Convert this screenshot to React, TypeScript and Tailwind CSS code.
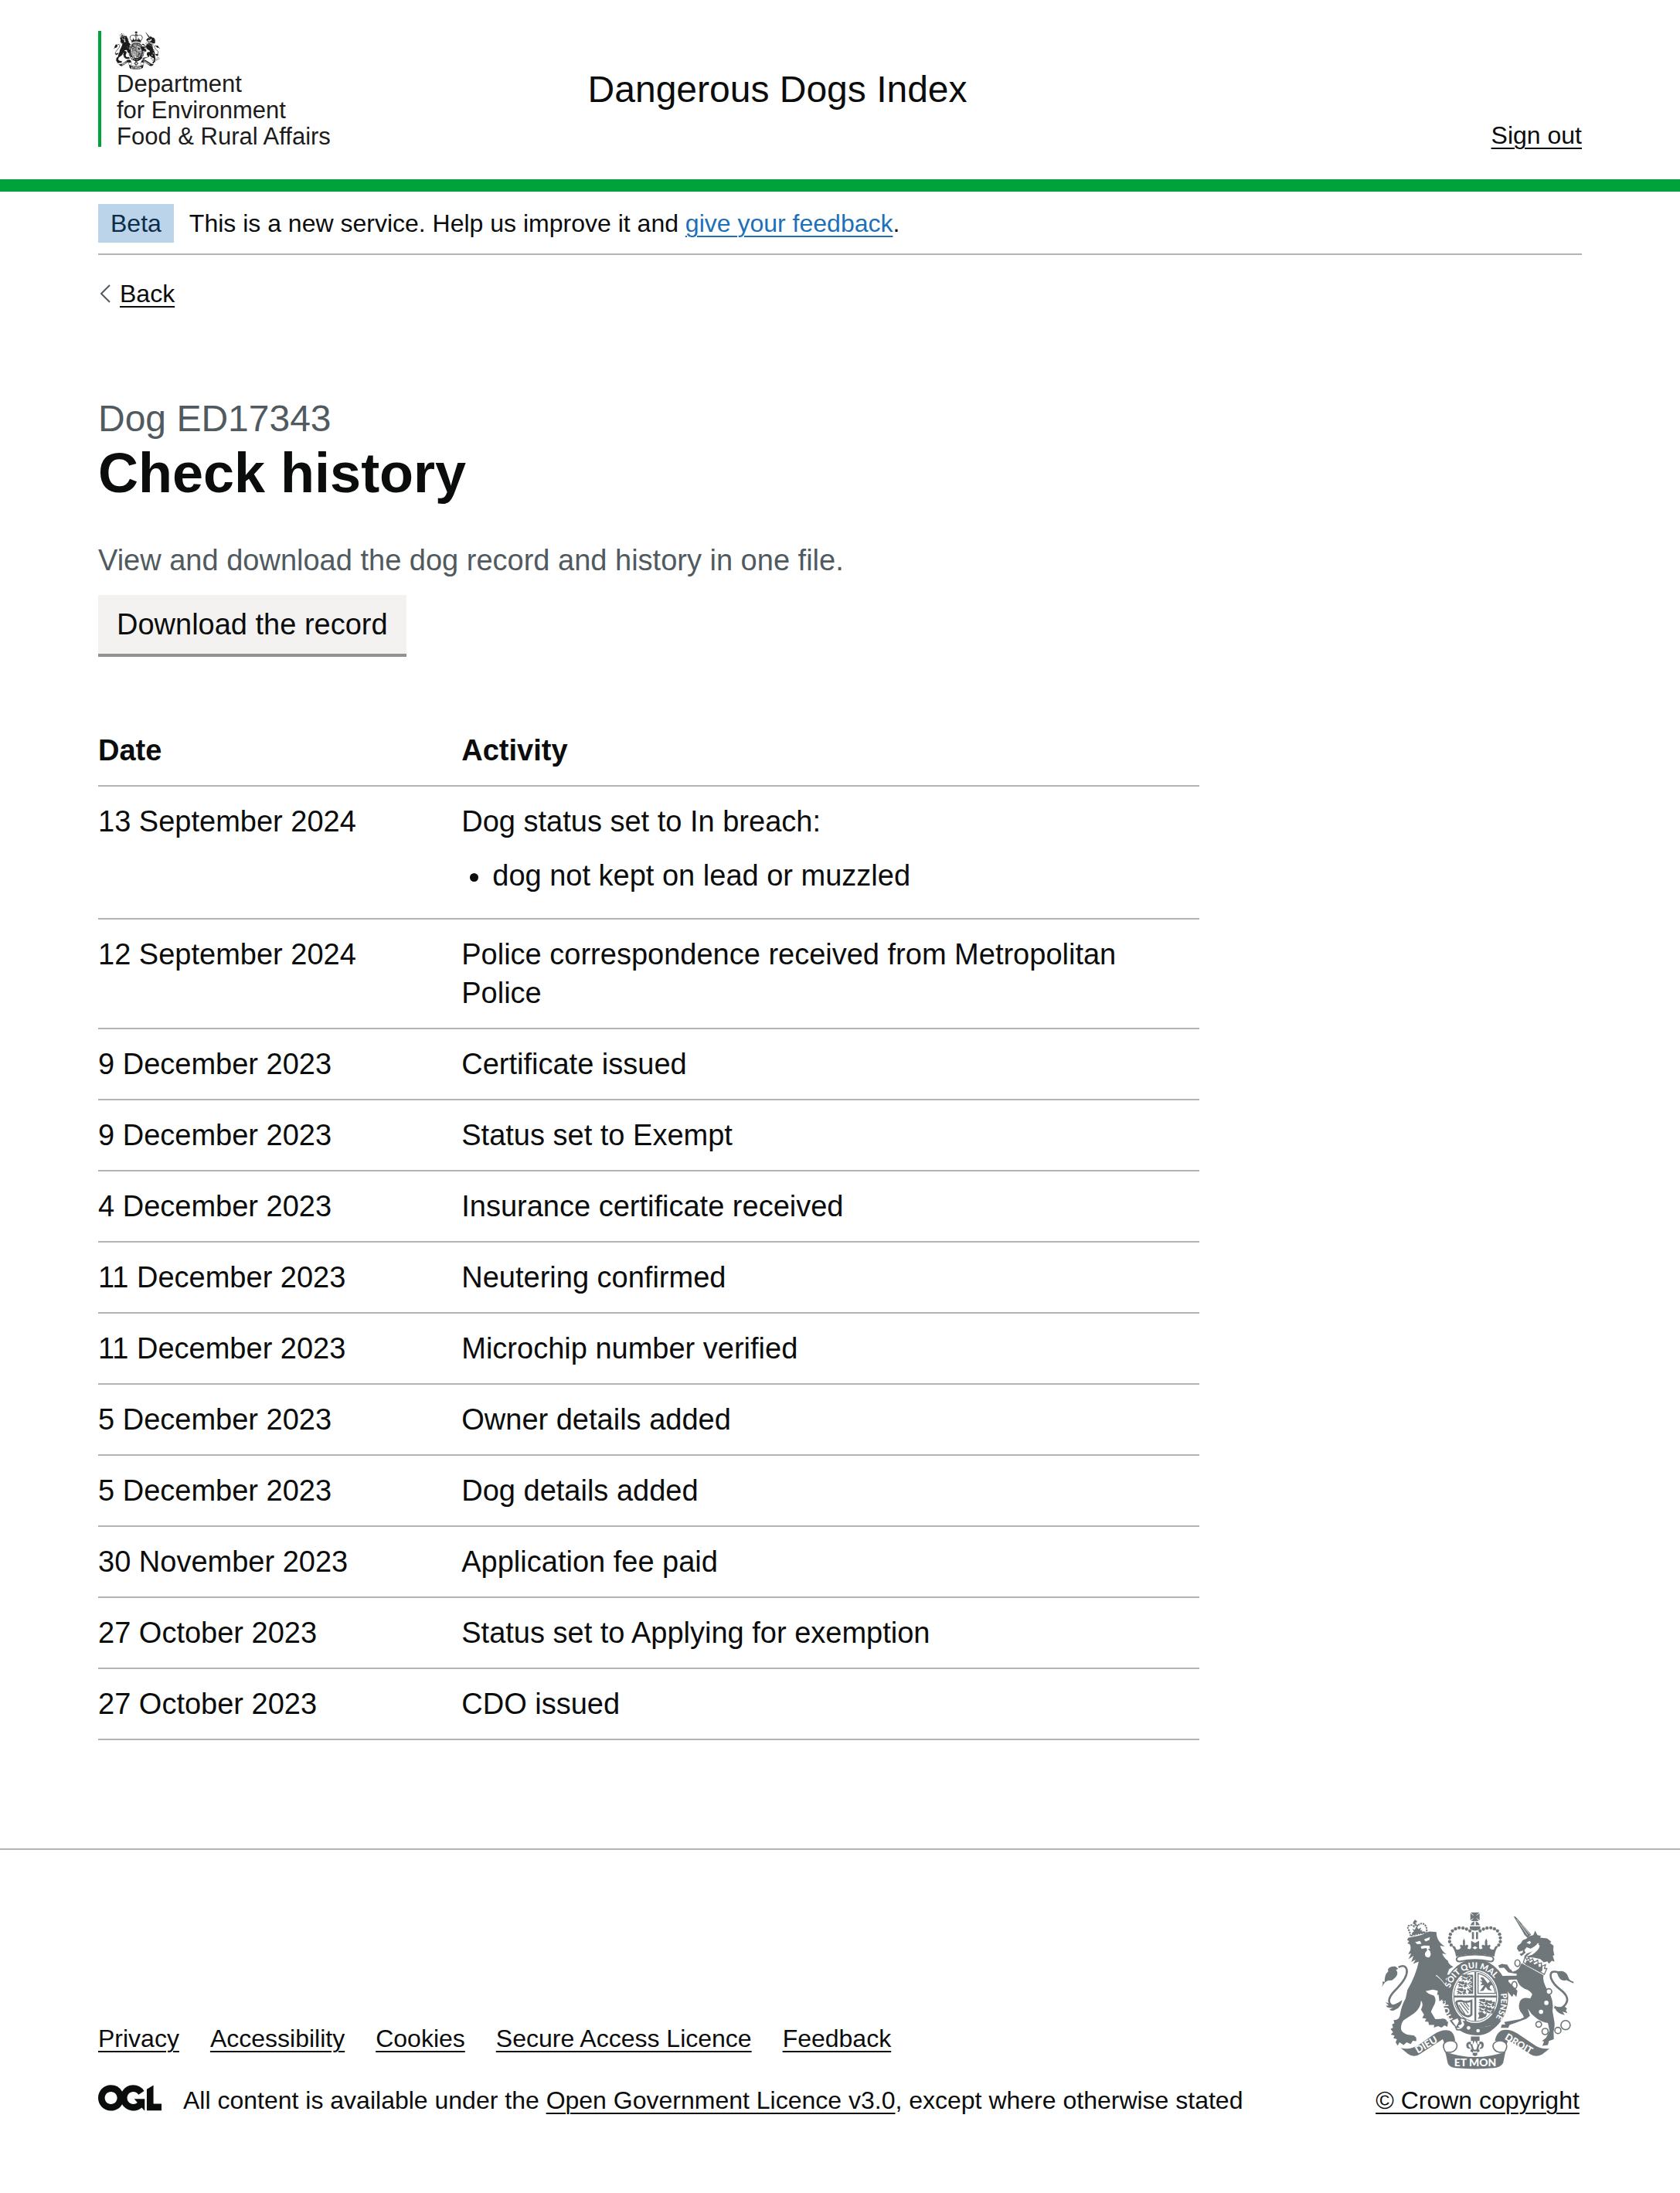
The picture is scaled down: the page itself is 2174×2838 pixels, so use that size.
const activities: { date: string; activity: string; details?: string[] }[] = [
  { date: '13 September 2024', activity: 'Dog status set to In breach:', details: ['dog not kept on lead or muzzled'] },
  { date: '12 September 2024', activity: 'Police correspondence received from Metropolitan Police' },
  { date: '9 December 2023', activity: 'Certificate issued' },
  { date: '9 December 2023', activity: 'Status set to Exempt' },
  { date: '4 December 2023', activity: 'Insurance certificate received' },
  { date: '11 December 2023', activity: 'Neutering confirmed' },
  { date: '11 December 2023', activity: 'Microchip number verified' },
  { date: '5 December 2023', activity: 'Owner details added' },
  { date: '5 December 2023', activity: 'Dog details added' },
  { date: '30 November 2023', activity: 'Application fee paid' },
  { date: '27 October 2023', activity: 'Status set to Applying for exemption' },
  { date: '27 October 2023', activity: 'CDO issued' },
];

const footerLinks = ['Privacy', 'Accessibility', 'Cookies', 'Secure Access Licence', 'Feedback'];

const linkClass = 'underline decoration-2 underline-offset-[5px]';

const leftBeads: [number, number][] = [
  [410, 229], [404, 216], [404, 201], [407, 187], [415, 174], [427, 166], [441, 162], [456, 163], [470, 167], [483, 174],
];

function CrownCross() {
  return (
    <>
      <path d="M486 102H520L509 112V114L521 105V133L509 123V125L518 135H488L497 125V123L485 133V105L497 114V112Z" />
      <path d="M487 148Q492 138 503 137Q515 138 520 148L522 152H485Z" />
      <path d="M483 156H524V166Q503 180 483 166Z" />
      <path d="M500 137H506V152H500Z" fill="white" />
    </>
  );
}

function StateCrown() {
  return (
    <g>
      <CrownCross />
      {leftBeads.map(([x, y]) => (
        <g key={`${x}-${y}`}>
          <circle cx={x} cy={y} r="6.5" />
          <circle cx={1006 - x} cy={y} r="6.5" />
        </g>
      ))}
      <path d="M491 178H499V206H491ZM507 178H515V206H507Z" />
      <path d="M488 212L503 221L519 212V244L503 233L488 244Z" />
      <path d="M413 234Q424 228 430 246Q440 250 448 240Q440 228 450 228Q458 236 456 222Q454 214 460 203Q466 214 464 222Q462 236 470 228Q482 228 473 242Q484 250 490 238L503 246L516 238Q522 250 533 242Q524 228 536 228Q544 236 542 222Q540 214 547 203Q553 214 551 222Q550 236 558 228Q568 228 560 240Q566 250 577 246Q582 228 594 234Q582 246 579 274Q503 254 429 274Q424 246 413 234Z" />
      <path d="M444 273Q503 260 564 273Q577 276 575 286Q572 296 560 293Q503 281 447 293Q434 296 431 286Q430 277 444 273Z" fill="white" stroke="currentColor" strokeWidth="6" />
    </g>
  );
}

function HeraldicLion({ x, y }: { x: number; y: number }) {
  return (
    <g transform={`translate(${x} ${y})`}>
      <path d="M2 5Q9 0 16 3L25 1L28 9Q34 2 39 10L36 18L43 25L34 22L29 28L25 20L18 26L11 22L2 27L8 18L0 16L9 12Z" />
      <path d="M7 9L21 15L32 11L23 20L13 17Z" fill="white" />
    </g>
  );
}

function Garter() {
  return (
    <g>
      <defs>
        <path id="garter-left" d="M421 525A99 114 0 0 1 401 425" />
        <path id="garter-top" d="M405 400A103 118 0 0 1 601 404" />
        <path id="garter-right" d="M603 419A103 118 0 0 1 560 540" />
      </defs>
      <ellipse cx="505" cy="433" rx="128" ry="148" />
      <ellipse cx="504" cy="430" rx="90" ry="104" fill="white" />
      <ellipse cx="504" cy="430" rx="84" ry="98" fill="none" stroke="currentColor" strokeWidth="3" />
      <path d="M501 334H508V526H501ZM420 427H589V434H420Z" />
      <path d="M497 420Q459 424 426 417Q430 365 460 346L497 338Z" fill="white" />
      <HeraldicLion x={447} y={342} />
      <HeraldicLion x={434} y={369} />
      <HeraldicLion x={430} y={396} />
      <path d="M470 345H496V420H475L480 410L470 401L484 394L473 382L486 371L472 365L482 355Z" />
      <path d="M480 350L491 358L479 365L491 375L478 385L492 390L478 399L491 409" fill="none" stroke="white" strokeWidth="3" />
      <path d="M515 340Q571 353 583 418H515Z" fill="none" stroke="currentColor" strokeWidth="4" />
      <path d="M524 357Q535 350 542 365L553 379L562 370L571 385L562 388L560 397L570 408L554 405L545 393L536 408L522 409L531 397L539 385L524 387L532 377L521 370L532 369Z" />
      <path d="M432 450Q447 445 455 449Q471 454 489 447V501Q480 513 463 504Q441 493 430 454Z" fill="none" stroke="currentColor" strokeWidth="8" />
      <path d="M446 455L477 495M457 454L479 483M467 454L480 471M440 463L464 500" stroke="currentColor" strokeWidth="4" />
      <HeraldicLion x={516} y={438} />
      <HeraldicLion x={543} y={444} />
      <HeraldicLion x={515} y={464} />
      <HeraldicLion x={541} y={471} />
      <path d="M515 494L530 489L541 499L550 496L546 508L530 516L514 518L520 507Z" />
      <path d="M421 525Q485 571 568 546" fill="none" stroke="white" strokeWidth="6" />
      <path d="M432 520Q500 566 572 541L586 542Q557 586 501 581Q455 571 424 552Z" />
      <path d="M430 548L413 525L435 516L440 528Z" fill="white" />
      <path d="M444 515Q462 512 469 527L459 528Q469 539 457 551Q448 564 431 559Q426 549 438 550Q430 542 441 540Q453 538 447 530Z" fill="white" stroke="currentColor" strokeWidth="5" />
      <circle cx="478" cy="553" r="7" fill="white" />
      <circle cx="515" cy="564" r="7" fill="white" />
      <g fill="white" fontFamily="Lato, sans-serif" fontWeight="900" fontSize="34">
        <text><textPath href="#garter-left" startOffset="6">HON</textPath></text>
        <text fontSize="33"><textPath href="#garter-top" startOffset="2">SOIT QUI MAL</textPath></text>
        <text fontSize="32"><textPath href="#garter-right" startOffset="0">PENSE</textPath></text>
      </g>
    </g>
  );
}

function Lion() {
  return (
    <g transform="translate(120 75)">
      <path d="M132 119L126 98Q115 82 126 78Q137 73 145 82L152 73L159 80Q172 64 184 73Q197 82 194 105L196 107Q162 107 132 119Z" fill="white" stroke="currentColor" strokeWidth="6" strokeDasharray="7 3" />
      <path d="M137 106L145 100L137 91L148 94L155 79L161 92L173 86L169 98L178 94L174 101L188 101L190 107Q162 108 137 116ZM149 55L158 63L150 68L152 76L140 70L143 62Z" />
      <path d="M122 126L147 121Q171 118 205 101L232 103L234 120Q240 144 265 160L247 157Q251 176 272 191L255 187Q262 206 277 215Q279 230 298 239L282 248L274 270L291 270L268 287Q276 306 267 323L288 345L297 375L292 388L285 378L277 390L277 371L264 382L269 362L253 374L260 353L244 360L247 345L235 350L238 333L218 328L190 334Q198 344 222 352Q237 368 219 397L211 415L228 444L248 443Q266 437 278 455L275 474L264 468L252 477L239 471L222 477L224 466L203 466L201 454L187 453L193 442L177 439L184 426L172 407Q184 384 172 371Q172 399 145 421L104 448Q93 462 94 483Q97 496 118 504L145 508Q157 516 153 530L140 528L132 541L116 534L104 545L88 534L81 547L73 534L78 522L64 518L69 508L54 504L63 494L53 482L63 477L59 464L68 460L65 447Q89 450 91 422Q96 391 112 363L119 330Q153 271 163 219L141 228L151 211L134 220L143 196L123 210L134 187L122 190L130 176Q134 164 128 151L119 148L126 139L118 135Z" />
      <path d="M149 143L168 138L174 149L158 151ZM184 132L207 123L205 134L190 140ZM171 160L184 156L205 157L207 168L199 170L207 177Q215 196 202 203Q185 203 188 185L196 175L194 166L174 169Z" fill="white" />
      <path d="M231 273Q255 293 274 323" fill="none" stroke="white" strokeWidth="5" />
      <path d="M84 241Q113 227 117 254Q119 281 80 322Q34 365 53 386Q59 398 84 383" fill="none" stroke="currentColor" strokeWidth="8" />
      <path d="M18 319Q25 307 22 296L30 299Q29 269 44 257L43 249Q50 236 72 238L83 247L74 252Q91 268 59 292L43 293L53 287L31 300ZM33 377L47 382Q56 393 72 386L99 369Q92 400 74 405Q59 416 49 406L64 399Q38 402 36 391L46 390Z" />
    </g>
  );
}

function Unicorn() {
  return (
    <g transform="translate(480 75)">
      <path d="M174 42L182 44L242 112L229 127L216 114L207 97Z" />
      <path d="M186 54L229 116M206 74L237 112" stroke="white" strokeWidth="2" />
      <path d="M223 130L238 118L251 115L258 98L267 115L281 118L277 125L305 128L321 141L316 146L330 157L329 174L333 193L327 197L334 219L323 216L312 227L306 218L292 222L278 209L254 204L237 202L215 199L225 188Q265 174 270 156L273 145Q253 164 240 168L225 163L216 174L221 184L204 198L197 189L209 185L211 176L195 180L187 168L190 157L202 148L210 135Z" />
      <path d="M224 145L236 138L242 143L237 151ZM266 147L276 157Q274 174 246 192L223 199Q263 170 266 147Z" fill="white" />
      <path d="M212 222L219 199L225 211L234 203L237 215L248 208L254 222L268 213L270 227L283 224L282 237L299 231L294 246L304 246L294 269Z" fill="white" stroke="currentColor" strokeWidth="4" />
      <path d="M223 217L231 213L239 223L250 216L254 230L270 225L273 240L287 238L286 254L278 260L219 231Z" />
      <path d="M205 225L291 272Q284 294 310 336Q332 369 326 413L332 447Q337 469 330 492L331 522L312 529L308 545L286 548L293 531L285 529L301 516L314 490L308 459Q282 455 263 440L244 423L229 402L238 431L224 442L184 457L158 466L153 478L124 478L128 465L142 465L137 455L200 444L214 437L210 426Q187 405 198 376Q207 355 239 363L247 347Q240 332 217 325Q192 312 187 289L155 290L143 293L166 326L185 332L184 353L173 344L169 355L157 341L151 331L126 288L135 275L185 274L187 267L153 261L137 243L118 244L114 234L128 228L149 231L160 249L180 256L194 247Z" />
      <ellipse cx="189" cy="225" rx="10" ry="13" fill="white" stroke="currentColor" strokeWidth="5" />
      <circle cx="172" cy="252" r="6" fill="white" />
      <ellipse cx="177" cy="311" rx="10" ry="14" fill="white" stroke="currentColor" strokeWidth="5" />
      <g fill="white" stroke="currentColor" strokeWidth="5">
        <circle cx="312" cy="336" r="11" />
        <circle cx="302" cy="380" r="11" />
        <circle cx="281" cy="415" r="11" />
        <circle cx="272" cy="464" r="11" />
        <circle cx="297" cy="492" r="12" />
        <circle cx="347" cy="488" r="12" />
        <circle cx="377" cy="467" r="18" />
      </g>
      <path d="M349 261Q312 249 320 284Q330 309 355 327Q398 359 376 387Q358 409 333 397" fill="none" stroke="currentColor" strokeWidth="8" />
      <path d="M343 260Q359 252 374 260L382 267L388 281Q391 294 408 297V304L380 291Q355 299 345 267ZM330 381Q334 404 372 393L383 403L378 408L384 420L365 414L374 428Q351 423 340 410Z" />
    </g>
  );
}

function MottoRibbon() {
  return (
    <g>
      <path d="M213 631Q249 642 287 617L341 579Q372 558 402 563Q422 569 426 604Q404 602 384 614L377 597L291 653Q266 673 240 654Z" />
      <path d="M794 634Q759 638 729 615L671 576Q636 554 606 563Q586 574 581 603Q607 602 626 618L633 600L721 657Q741 669 765 657Z" />
      <path d="M414 604Q431 606 433 623Q431 643 410 648L388 647Q374 624 384 612Q396 600 414 604ZM595 604Q575 607 573 624Q576 643 597 648L619 647Q633 625 623 612Q611 600 595 604Z" fill="white" stroke="currentColor" strokeWidth="5" />
      <path d="M387 646Q503 688 622 646L613 690Q604 707 576 710Q503 717 432 710Q405 708 397 692Z" />
      <path d="M487 587H521V604H512V617H520V607Q539 604 537 623Q535 635 524 635L519 632L521 645L512 649V659L503 664L494 659V649L485 645L488 632Q472 640 469 623Q468 606 487 607V617H495V604H487Z" />
      <path d="M503 602L513 621L508 638H499L493 621ZM478 617Q486 611 491 639L484 630Q477 631 478 617ZM528 617Q520 611 516 639L523 630Q530 631 528 617ZM495 645H512V650H495Z" fill="white" />
      <g fill="white" fontFamily="Lato, sans-serif" fontWeight="900">
        <text x="504" y="704" fontSize="42" textAnchor="middle">ET MON</text>
        <text transform="translate(280 654) rotate(-31)" fontSize="39">DIEU</text>
        <text transform="translate(617 596) rotate(31)" fontSize="38">DROIT</text>
      </g>
    </g>
  );
}

function RoyalArms({ className }: { className: string }) {
  return (
    <svg viewBox="137 99 752 616" className={className} fill="currentColor" aria-hidden="true">
      <Lion />
      <Unicorn />
      <Garter />
      <path d="M351 349Q380 371 400 408L414 438L405 465L397 452L389 465L388 443L377 458L380 438L364 449Z" />
      <path d="M598 350L635 351L634 372L669 408L665 432L654 420L648 432L633 414L608 365Z" />
      <StateCrown />
      <MottoRibbon />
    </svg>
  );
}

function OglLogo() {
  return (
    <svg viewBox="0 0 483 196" className="h-[34px] w-[82px] shrink-0" fill="currentColor" role="img" aria-label="Open Government Licence">
      <path d="M421.5 142.8V.1l-50.7 32.3v161.1h112.4v-50.7zm-122.3-9.6A47.12 47.12 0 0 1 221 97.8c0-26 21.1-47.1 47.1-47.1 16.7 0 31.4 8.7 39.7 21.8l42.7-27.2A97.63 97.63 0 0 0 268.1 0c-36.5 0-68.3 20.1-85.1 49.7A98 98 0 0 0 97.8 0C43.9 0 0 43.9 0 97.8s43.9 97.8 97.8 97.8c36.5 0 68.3-20.1 85.1-49.7a97.76 97.76 0 0 0 149.6 25.4l19.4 22.2h3v-87.8h-80l24.3 27.5zM97.8 145c-26 0-47.1-21.1-47.1-47.1s21.1-47.1 47.1-47.1 47.1 21.1 47.1 47.1S123.8 145 97.8 145" />
    </svg>
  );
}

function Header() {
  return (
    <header className="border-b-16 border-[#00a33b]">
      <div className="mx-auto flex max-w-[1920px] pt-10 pb-[37px]">
        <div className="w-[33%]">
          <a href="#" className="block h-[150px] w-fit border-l-4 border-[#00a33b] pl-5 text-[#1c1c1c]">
            <RoyalArms className="-ml-1 h-[50px] w-[60px]" />
            <span className="block pt-0.5 text-[31px] leading-[34px]">
              Department
              <br />
              for Environment
              <br />
              Food &amp; Rural Affairs
            </span>
          </a>
        </div>
        <p className="mt-[46px] flex-1 text-5xl leading-[60px]">Dangerous Dogs Index</p>
        <a href="#" className={`mt-[115px] text-[32px] leading-10 ${linkClass}`}>Sign out</a>
      </div>
    </header>
  );
}

function PhaseBanner() {
  return (
    <div className="flex items-center gap-5 border-b-2 border-[#b1b4b6] pt-4 pb-3.5 text-[32px] leading-10">
      <strong className="bg-[#bbd4ea] px-4 py-[5px] font-normal text-[#0c2d4a]">Beta</strong>
      <span>
        This is a new service. Help us improve it and{' '}
        <a href="#" className={`text-[#1d70b8] ${linkClass}`}>give your feedback</a>.
      </span>
    </div>
  );
}

function HistoryTable() {
  return (
    <table className="mt-[76px] w-[calc(75%-15px)] border-collapse text-left text-[38px] leading-[50px]">
      <thead>
        <tr className="border-b-2 border-[#b1b4b6]">
          <th scope="col" className="w-[33%] py-5 pr-10 font-bold">Date</th>
          <th scope="col" className="py-5 font-bold">Activity</th>
        </tr>
      </thead>
      <tbody>
        {activities.map((row, i) => (
          <tr key={i} className="border-b-2 border-[#b1b4b6] align-top">
            <td className="py-5 pr-10">{row.date}</td>
            <td className="py-5 pr-10">
              {row.activity}
              {row.details && (
                <ul className="mt-5 mb-2.5 list-disc pl-10">
                  {row.details.map((detail) => (
                    <li key={detail}>{detail}</li>
                  ))}
                </ul>
              )}
            </td>
          </tr>
        ))}
      </tbody>
    </table>
  );
}

function Footer() {
  return (
    <footer className="mt-[140px] border-t-2 border-[#b1b4b6] pt-20 pb-[100px]">
      <div className="mx-auto flex max-w-[1920px] items-end justify-between text-[32px] leading-10">
        <div>
          <ul className="mb-10 flex gap-10">
            {footerLinks.map((label) => (
              <li key={label}>
                <a href="#" className={linkClass}>{label}</a>
              </li>
            ))}
          </ul>
          <div className="flex items-start gap-7">
            <OglLogo />
            <span>
              All content is available under the{' '}
              <a href="#" className={linkClass}>Open Government Licence v3.0</a>, except where otherwise stated
            </span>
          </div>
        </div>
        <a href="#" className={`flex w-[270px] flex-col items-center gap-5 whitespace-nowrap ${linkClass}`}>
          <RoyalArms className="h-[204px] w-[250px] text-[#6f777b]" />
          © Crown copyright
        </a>
      </div>
    </footer>
  );
}

export default function App() {
  return (
    <div className="min-h-screen bg-white font-['Liberation_Sans',Arial,sans-serif] text-[#0b0c0c]">
      <Header />
      <div className="mx-auto max-w-[1920px]">
        <PhaseBanner />
        <a href="#" className="mt-[30px] flex w-fit items-center gap-2.5 text-[32px] leading-10">
          <svg viewBox="0 0 18 24" className="h-6 w-[18px]" fill="none" stroke="#505a5f" strokeWidth="2" aria-hidden="true">
            <path d="M15 1L4 12L15 23" />
          </svg>
          <span className={linkClass}>Back</span>
        </a>
        <main className="pt-28">
          <span className="block text-5xl leading-[60px] text-[#505a5f]">Dog ED17343</span>
          <h1 className="text-7xl leading-20 font-bold">Check history</h1>
          <p className="mt-12 mb-5 text-[38px] leading-[50px] text-[#505a5f]">
            View and download the dog record and history in one file.
          </p>
          <button type="button" className="block border-b-4 border-[#929191] bg-[#f3f2f1] px-6 py-[13px] text-[38px] leading-[50px]">
            Download the record
          </button>
          <HistoryTable />
        </main>
      </div>
      <Footer />
    </div>
  );
}
